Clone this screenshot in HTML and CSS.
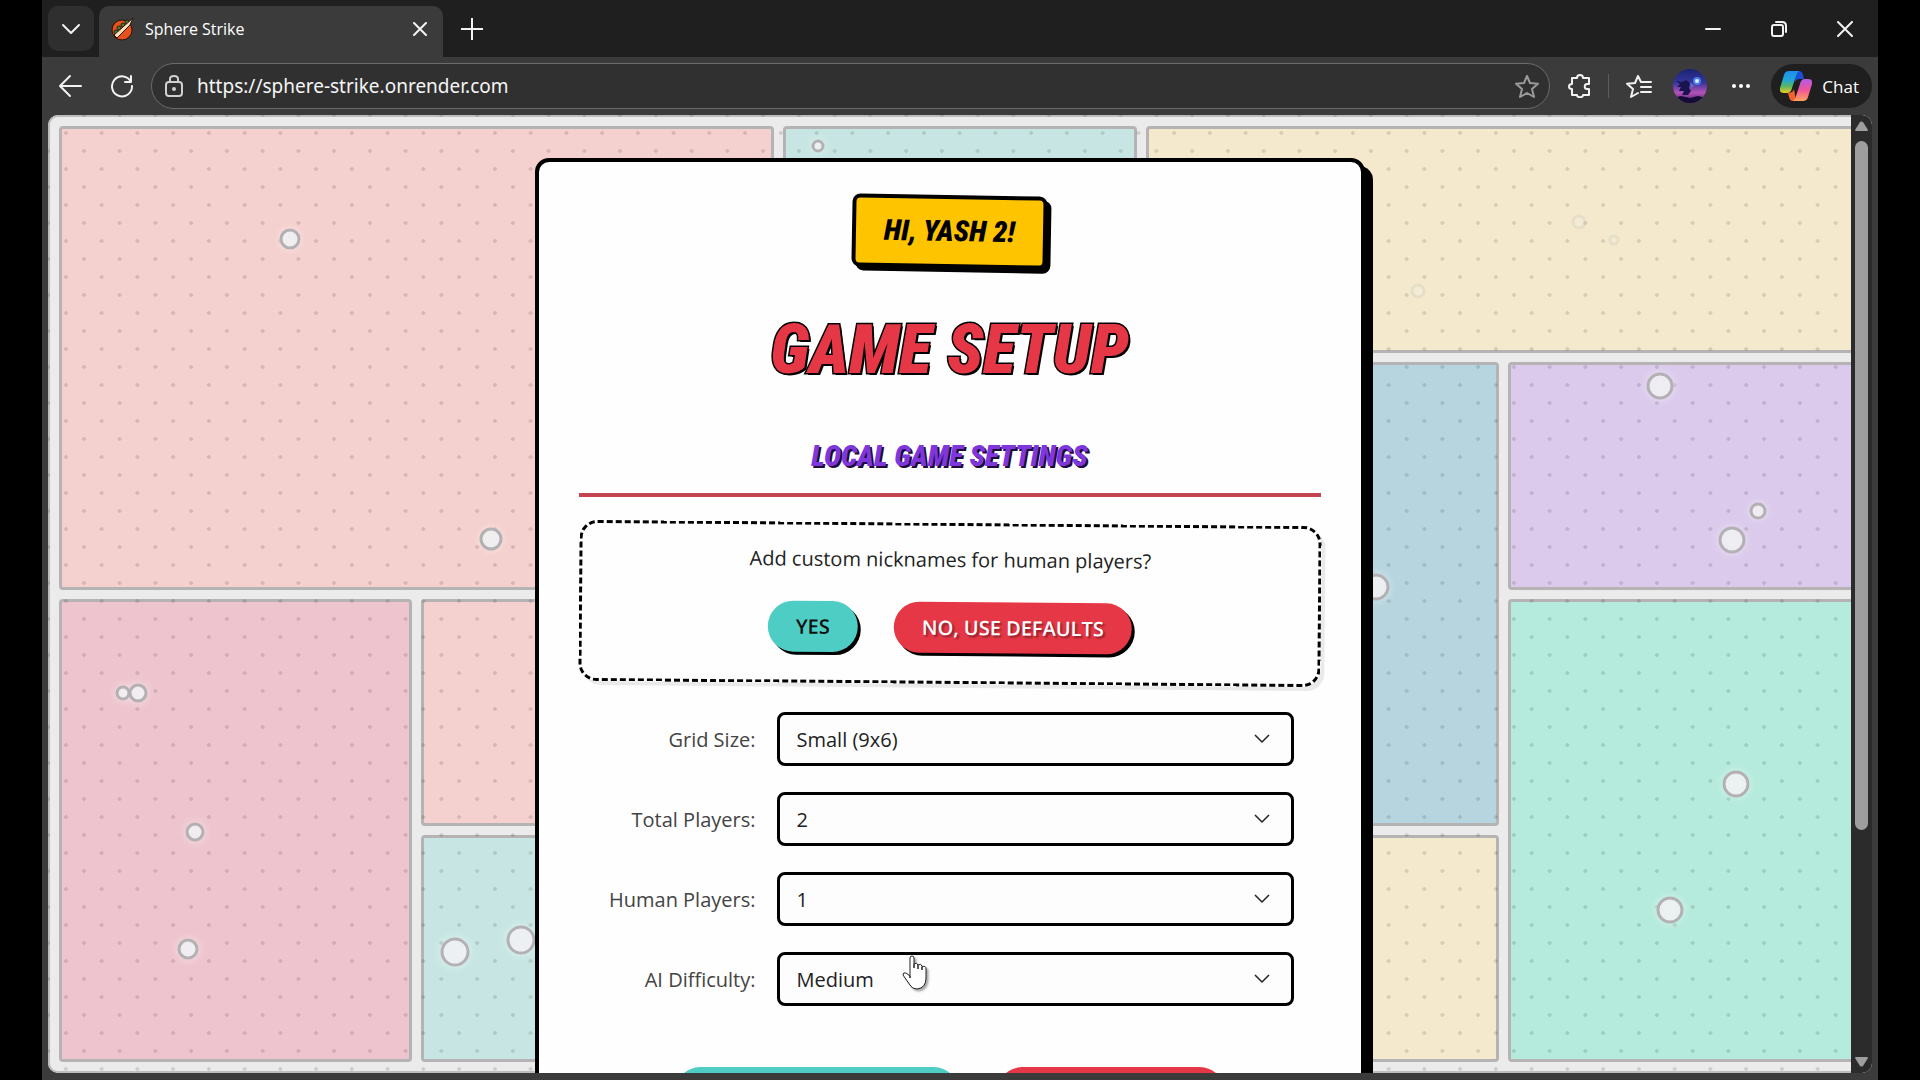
FILE: index.html
```html
<!DOCTYPE html>
<html lang="en">
<head>
  <meta charset="UTF-8">
  <meta name="viewport" content="width=device-width, initial-scale=1.0">
  <title>Sphere Strike</title>
  <link rel="stylesheet" href="styles.css">
</head>
<body>
  <div class="browser">
    <header class="tab-strip">
      <button class="tab-menu" aria-label="Tab actions">
        <svg width="20" height="20" viewBox="0 0 20 20"><path d="M2 6l8 8 8-8"/></svg>
      </button>
      <div class="tab">
        <svg class="favicon" width="23" height="23" viewBox="0 0 23 23">
          <circle cx="11" cy="12" r="10" fill="#e8501c" stroke="#2a120a"/>
          <g fill="#4d7a35" stroke="#1f2412"><circle cx="5" cy="14" r="2"/><circle cx="8" cy="10" r="2"/><circle cx="12" cy="7" r="2"/><circle cx="16" cy="4" r="2"/></g>
          <path d="M3 17L22 0 19 7 6 20z" fill="#f6e2b4" stroke="#2a120a"/>
        </svg>
        <span class="tab-title">Sphere Strike</span>
        <button class="icon-btn" aria-label="Close tab">
          <svg width="14" height="14" viewBox="0 0 14 14"><path d="M1 1l12 12M13 1L1 13"/></svg>
        </button>
      </div>
      <button class="icon-btn new-tab" aria-label="New tab">
        <svg width="22" height="22" viewBox="0 0 22 22"><path d="M11 0v22M0 11h22"/></svg>
      </button>
      <div class="window-controls">
        <button class="icon-btn" aria-label="Minimize">
          <svg width="16" height="16" viewBox="0 0 16 16"><path d="M1 8h14"/></svg>
        </button>
        <button class="icon-btn" aria-label="Restore">
          <svg width="16" height="16" viewBox="0 0 16 16"><rect x="1" y="4" width="11" height="11" rx="2"/><path d="M5 1h6q4 0 4 4v6"/></svg>
        </button>
        <button class="icon-btn" aria-label="Close">
          <svg width="16" height="16" viewBox="0 0 16 16"><path d="M1 1l14 14M15 1L1 15"/></svg>
        </button>
      </div>
    </header>

    <div class="toolbar">
      <button class="icon-btn" aria-label="Back">
        <svg width="24" height="24" viewBox="0 0 24 24"><path d="M23 12H2M12 2L2 12l10 10"/></svg>
      </button>
      <button class="icon-btn reload" aria-label="Reload">
        <svg width="24" height="24" viewBox="0 0 24 24"><path d="M21 8a10 10 0 1 0 1 4M21 2v6h-6"/></svg>
      </button>
      <div class="address">
        <svg class="lock" width="20" height="24" viewBox="0 0 20 24"><rect x="2" y="8" width="16" height="14" rx="3"/><path d="M6 8V5q0-3 4-3t4 3v3"/><circle cx="10" cy="15" r="1"/></svg>
        <input class="url" type="text" aria-label="Address" value="https://sphere-strike.onrender.com">
        <button class="icon-btn star" aria-label="Add to favorites">
          <svg width="24" height="24" viewBox="0 0 24 24"><path d="M12 2l3 7 8 .7-6 5.300 2 8L12 19l-7 4 2-8-6-5.300L9 9z"/></svg>
        </button>
      </div>
      <button class="icon-btn extensions" aria-label="Extensions">
        <svg width="24" height="24" viewBox="0 0 24 24"><path d="M4 4h5c0-4 6-4 6 0h6v6h-2c-3 0-3 5 0 5h2v6h-6c0 3-6 3-6 0H4v-6c-4 0-4-5 0-5z"/></svg>
      </button>
      <span class="divider"></span>
      <button class="icon-btn favorites" aria-label="Favorites">
        <svg width="26" height="24" viewBox="0 0 26 24"><path d="M17 8h-2l-3-6-3 7-8 .7 6 5.300-2 8 7-4M17 8h8M15 13h10M15 18h10"/></svg>
      </button>
      <button class="icon-btn profile" aria-label="Profile">
        <svg width="34" height="34" viewBox="0 0 34 34">
          <defs>
            <linearGradient id="sky" x1="0" y1="0" x2="0" y2="1"><stop offset="0" stop-color="#1b2372"/><stop offset=".4" stop-color="#35359c"/><stop offset=".7" stop-color="#b552b8"/><stop offset="1" stop-color="#3b1a5c"/></linearGradient>
            <clipPath id="round"><circle cx="17" cy="17" r="17"/></clipPath>
          </defs>
          <g clip-path="url(#round)">
            <rect width="34" height="34" fill="url(#sky)"/>
            <path d="M3 12l6 1 4-2 4 3-1 5 2 3-3 4H9l2-4-5 0 2-4-4 0 3-3z" fill="#18154e"/>
            <path d="M0 29l8-2 9 2 8-2 9 2v6H0z" fill="#160c38"/>
            <path d="M17 13l4 4-3 2" fill="#6a72c8"/>
            <circle cx="24" cy="12" r="4" fill="#4c7df0"/><circle cx="24" cy="12" r="2" fill="#d8f0ff"/>
          </g>
        </svg>
      </button>
      <button class="icon-btn more" aria-label="Settings and more">
        <svg width="20" height="6" viewBox="0 0 20 6"><g fill="#fff" stroke="none"><circle cx="3" cy="3" r="2"/><circle cx="10" cy="3" r="2"/><circle cx="17" cy="3" r="2"/></g></svg>
      </button>
      <button class="chat-btn">
        <svg width="32" height="30" viewBox="0 0 32 30">
          <defs>
            <linearGradient id="cool" x1="0" y1="0" x2="0" y2="1"><stop offset="0" stop-color="#1d8ff0"/><stop offset=".4" stop-color="#22a5d8"/><stop offset=".7" stop-color="#58b860"/><stop offset="1" stop-color="#f2cb22"/></linearGradient>
            <linearGradient id="warm" x1="0" y1="0" x2="0" y2="1"><stop offset="0" stop-color="#b35be8"/><stop offset=".5" stop-color="#f0569a"/><stop offset="1" stop-color="#ffa45c"/></linearGradient>
          </defs>
          <g stroke="none">
            <path d="M16 0h3q3 0 4 4l1 4h-5q-3 0-4 4z" fill="#1b4fd8"/>
            <path d="M9 0h10q-2 1-3 5l-4 12q-1 5-5 5H4q-5 0-4-5L4 4q1-4 5-4z" fill="url(#cool)"/>
            <path d="M16 30h-3q-3 0-4-4l-1-4q5 0 6-4z" fill="#f4622c"/>
            <path d="M23 30H13q2-1 3-5l4-12q1-5 5-5h3q5 0 4 5l-4 13q-1 4-5 4z" fill="url(#warm)"/>
          </g>
        </svg>
        <span>Chat</span>
      </button>
    </div>

    <div class="viewport">
      <!-- comic panels behind the game card -->
      <div class="panels">
        <div class="panel red wide tall"></div>
        <div class="panel teal"></div>
        <div class="panel yellow wide"></div>
        <div class="panel green"></div>
        <div class="panel blue tall"></div>
        <div class="panel purple"></div>
        <div class="panel pink tall"></div>
        <div class="panel red"></div>
        <div class="panel yellow"></div>
        <div class="panel green tall"></div>
        <div class="panel teal"></div>
        <div class="panel purple"></div>
        <div class="panel yellow"></div>
      </div>
      <div class="dots"></div>
      <svg class="bubbles" aria-hidden="true">
        <circle cx="242" cy="124" r="9"/>
        <circle cx="443" cy="424" r="10"/>
        <circle cx="75" cy="578" r="6"/>
        <circle cx="90" cy="578" r="8"/>
        <circle cx="147" cy="717" r="8"/>
        <circle cx="140" cy="834" r="9"/>
        <circle cx="407" cy="837" r="13"/>
        <circle cx="473" cy="825" r="13"/>
        <circle cx="770" cy="31" r="5"/>
        <circle cx="1612" cy="271" r="12"/>
        <circle cx="1710" cy="396" r="7"/>
        <circle cx="1684" cy="425" r="12"/>
        <circle cx="1328" cy="472" r="12"/>
        <circle cx="1688" cy="669" r="12"/>
        <circle cx="1622" cy="795" r="12"/>
        <g class="faded">
          <circle cx="1531" cy="107" r="6"/>
          <circle cx="1566" cy="125" r="4"/>
          <circle cx="1370" cy="176" r="6"/>
        </g>
      </svg>

      <main class="page">
        <section class="card">
          <p class="greeting">Hi, Yash 2!</p>
          <h1>Game Setup</h1>
          <h2>Local Game Settings</h2>

          <div class="nicknames">
            <p>Add custom nicknames for human players?</p>
            <div class="choices">
              <button class="btn btn-yes">Yes</button>
              <button class="btn btn-no">No, use defaults</button>
            </div>
          </div>

          <form class="settings">
            <label for="gridSize">Grid Size:</label>
            <select id="gridSize"><option>Small (9x6)</option></select>
            <label for="totalPlayers">Total Players:</label>
            <select id="totalPlayers"><option>2</option></select>
            <label for="humanPlayers">Human Players:</label>
            <select id="humanPlayers"><option>1</option></select>
            <label for="aiDifficulty">AI Difficulty:</label>
            <select id="aiDifficulty"><option>Medium</option></select>
          </form>

          <div class="actions">
            <button class="btn btn-yes start" aria-label="Start game"></button>
            <button class="btn btn-no back" aria-label="Back"></button>
          </div>
        </section>
      </main>

      <div class="scrollbar">
        <svg width="13" height="10" viewBox="0 0 13 10"><path d="M5 1q1-1 3 0l5 8q0 1-1 1H1q-1 0-1-1z"/></svg>
        <div class="track"><div class="thumb"></div></div>
        <svg width="13" height="10" viewBox="0 0 13 10"><path d="M5 9q1 1 3 0l5-8q0-1-1-1H1Q0 0 0 1z"/></svg>
      </div>

      <svg class="cursor" width="28" height="36" viewBox="0 0 28 36"><path d="M8 23V3q0-2 2-2t2 2v10V9q3-2 4 1v4-4q3-2 4 1v4-3q4-2 4 2v9q0 10-9 11-5 0-7-4l-7-10q0-3 3-2l4 3z"/></svg>
    </div>
  </div>
</body>
</html>
```
FILE: styles.css
```css
* {
  box-sizing: border-box;
  margin: 0;
  padding: 0;
}

body {
  background: #000;
  font-family: "Open Sans", sans-serif;
  font-size: 20px;
}

button {
  border: none;
  background: none;
  font: inherit;
  color: inherit;
  cursor: pointer;
}

svg {
  display: block;
  flex: none;
}

.browser {
  display: flex;
  flex-direction: column;
  height: 100vh;
  margin: 0 42px;
  background: #3b3b3b;
  color: #fff;
  overflow: hidden;
}

/* tab strip */
.tab-strip {
  display: flex;
  align-items: stretch;
  height: 57px;
  padding: 6px 0 0 6px;
  background: #1f1f1f;
}

.icon-btn,
.tab-menu {
  display: flex;
  align-items: center;
  justify-content: center;
}

.icon-btn svg,
.tab-menu svg,
.lock {
  fill: none;
  stroke: #f2f2f2;
  stroke-width: 2;
  stroke-linecap: round;
  stroke-linejoin: round;
}

.tab-menu {
  width: 46px;
  height: 45px;
  border-radius: 10px;
  background: #2f2f2f;
}

.tab {
  display: flex;
  align-items: center;
  width: 344px;
  margin-left: 5px;
  padding: 0 16px 5px 12px;
  border-radius: 10px 10px 0 0;
  background: #3b3b3b;
}

.tab-title {
  flex: 1;
  margin-left: 11px;
  font-size: 16px;
}

.new-tab {
  width: 58px;
  height: 45px;
}

.window-controls {
  display: flex;
  margin-left: auto;
}

.window-controls .icon-btn {
  width: 66px;
  height: 45px;
}

/* toolbar */
.toolbar {
  display: flex;
  align-items: center;
  height: 58px;
  padding: 0 6px 0 16px;
}

.reload {
  margin-left: 28px;
}

.address {
  display: flex;
  flex: 1;
  align-items: center;
  height: 46px;
  margin-left: 17px;
  padding: 0 10px 0 12px;
  border: 1px solid #6b6b6b;
  border-radius: 23px;
  background: #303030;
}

.lock {
  stroke: #d0d0d0;
}

.url {
  flex: 1;
  margin-left: 13px;
  border: none;
  outline: none;
  background: none;
  color: #f5f5f5;
  font-family: "Noto Sans", sans-serif;
  font-size: 19px;
}

.star svg {
  stroke: #9a9a9a;
}

.extensions {
  margin-left: 18px;
}

.divider {
  width: 1px;
  height: 24px;
  margin-left: 16px;
  background: #5c5c5c;
}

.favorites {
  margin-left: 17px;
}

.profile {
  margin-left: 21px;
}

.profile svg {
  stroke: none;
}

.more {
  margin-left: 24px;
}

.chat-btn {
  display: flex;
  align-items: center;
  gap: 10px;
  height: 44px;
  margin-left: 20px;
  padding: 0 13px 0 9px;
  border-radius: 22px;
  background: #1f1f1f;
  font-size: 17px;
}

/* visible page area */
.viewport {
  position: relative;
  display: flex;
  flex: 1;
  min-height: 0;
  margin: 0 6px 7px;
  border-radius: 10px;
  background: #ebebeb;
  overflow: hidden;
}

.panels {
  position: absolute;
  inset: 0;
  display: grid;
  grid-template-columns: repeat(5, 1fr);
  grid-template-rows: repeat(4, 1fr);
  grid-auto-flow: dense;
  gap: 9px;
  padding: 9px;
  border: 2px solid #bdbdbd;
  border-radius: 10px;
}

.panel {
  border: 3px solid #b5b3b3;
  border-radius: 4px;
}

.wide { grid-column: span 2; }
.tall { grid-row: span 2; }

.red { background: #f4d0ce; }
.teal { background: #c7e6e3; }
.yellow { background: #f4e9cc; }
.green { background: #b5ebdc; }
.blue { background: #b7d5df; }
.purple { background: #dbcaec; }
.pink { background: #eec5cf; }

.dots {
  position: absolute;
  inset: 0;
  background-image:
    radial-gradient(circle, rgba(0, 0, 0, 0.12) 2px, transparent 2px),
    radial-gradient(circle, rgba(0, 0, 0, 0.12) 2px, transparent 2px);
  background-position: 0 0, 18px 18px;
  background-size: 36px 36px;
  background-repeat: round repeat;
}

.bubbles {
  position: absolute;
  inset: 0;
  width: 100%;
  height: 100%;
  fill: rgba(240, 240, 242, 0.85);
  stroke: #b3b1b3;
  stroke-width: 3;
  filter: drop-shadow(0 0 4px rgba(255, 255, 255, 0.5));
}

.faded {
  opacity: 0.2;
}

.page {
  position: relative;
  flex: 1;
  padding: 43px 40px 0;
}

.card {
  max-width: 830px;
  margin: 0 auto;
  padding: 33px 40px;
  border: 4px solid #000;
  border-radius: 14px;
  background: #fefefe;
  box-shadow: 8px 8px 0 #000;
  color: #222;
  text-align: center;
}

.greeting {
  width: max-content;
  margin: 0 auto;
  padding: 12px 28px 13px;
  border: 4px solid #000;
  border-radius: 8px;
  background: #ffc400;
  box-shadow: 4px 4px 0 #000;
  color: #000;
  font-size: 29px;
  line-height: 40px;
  transform: rotate(1deg);
}

.greeting,
h1,
h2 {
  font-family: "Roboto Condensed", Roboto, sans-serif;
  font-style: italic;
  font-weight: 900;
  text-transform: uppercase;
}

h1 {
  margin-top: 42px;
  color: #e63746;
  font-size: 68px;
  line-height: 80px;
  -webkit-text-stroke: 3px #000;
  paint-order: stroke fill;
  text-shadow: 2px 2px 0 #000;
}

h2 {
  margin-top: 46px;
  padding-bottom: 17px;
  border-bottom: 4px solid #c4444f;
  color: #7e36dd;
  font-size: 29px;
  line-height: 40px;
  text-shadow: 2px 2px 0 #1d0b38;
}

.nicknames {
  margin-top: 26px;
  padding: 20px;
  border: 3px dashed #000;
  border-radius: 18px;
  box-shadow: 4px 4px 0 rgba(0, 0, 0, 0.08);
  transform: rotate(0.5deg);
}

.nicknames p {
  line-height: 28px;
}

.choices {
  display: flex;
  justify-content: center;
  gap: 36px;
  margin-top: 28px;
  margin-bottom: 8px;
}

.btn {
  height: 51px;
  padding: 0 28px;
  border-radius: 28px;
  box-shadow: 3px 3px 0 #000;
  font-size: 20px;
  font-weight: 600;
  text-transform: uppercase;
}

.btn-yes {
  background: #4ecdc4;
  color: #111;
}

.btn-no {
  background: #e63746;
  color: #fff;
  text-shadow: 2px 2px 2px rgba(0, 0, 0, 0.4);
}

.settings {
  display: grid;
  grid-template-columns: 150px 1fr;
  align-items: center;
  gap: 26px 21px;
  margin-top: 28px;
  padding: 0 27px;
}

.settings label {
  color: #444;
  text-align: right;
  white-space: nowrap;
}

.settings select {
  height: 54px;
  padding: 0 17px;
  border: 3px solid #000;
  border-radius: 8px;
  appearance: none;
  background: #fdfdfd url("data:image/svg+xml,%3Csvg xmlns='http://www.w3.org/2000/svg' width='16' height='10'%3E%3Cpath d='M1 1l7 7 7-7' fill='none' stroke='%23222' stroke-width='1.5'/%3E%3C/svg%3E") no-repeat right 21px center;
  color: #222;
  font: inherit;
}

.actions {
  display: flex;
  justify-content: center;
  gap: 38px;
  margin-top: 61px;
}

.start {
  min-width: 284px;
}

.back {
  min-width: 228px;
}

/* page scrollbar */
.scrollbar {
  position: relative;
  display: flex;
  flex-direction: column;
  align-items: center;
  gap: 10px;
  width: 21px;
  padding: 6px 0;
  background: #2b2b2b;
  fill: #9e9e9e;
}

.track {
  flex: 1;
  width: 13px;
}

.thumb {
  height: 76%;
  border-radius: 7px;
  background: #9e9e9e;
}

.cursor {
  position: absolute;
  left: 854px;
  top: 840px;
  fill: #fff;
  stroke: #222;
  stroke-width: 1;
  filter: drop-shadow(2px 2px 1px rgba(0, 0, 0, 0.35));
}
```
